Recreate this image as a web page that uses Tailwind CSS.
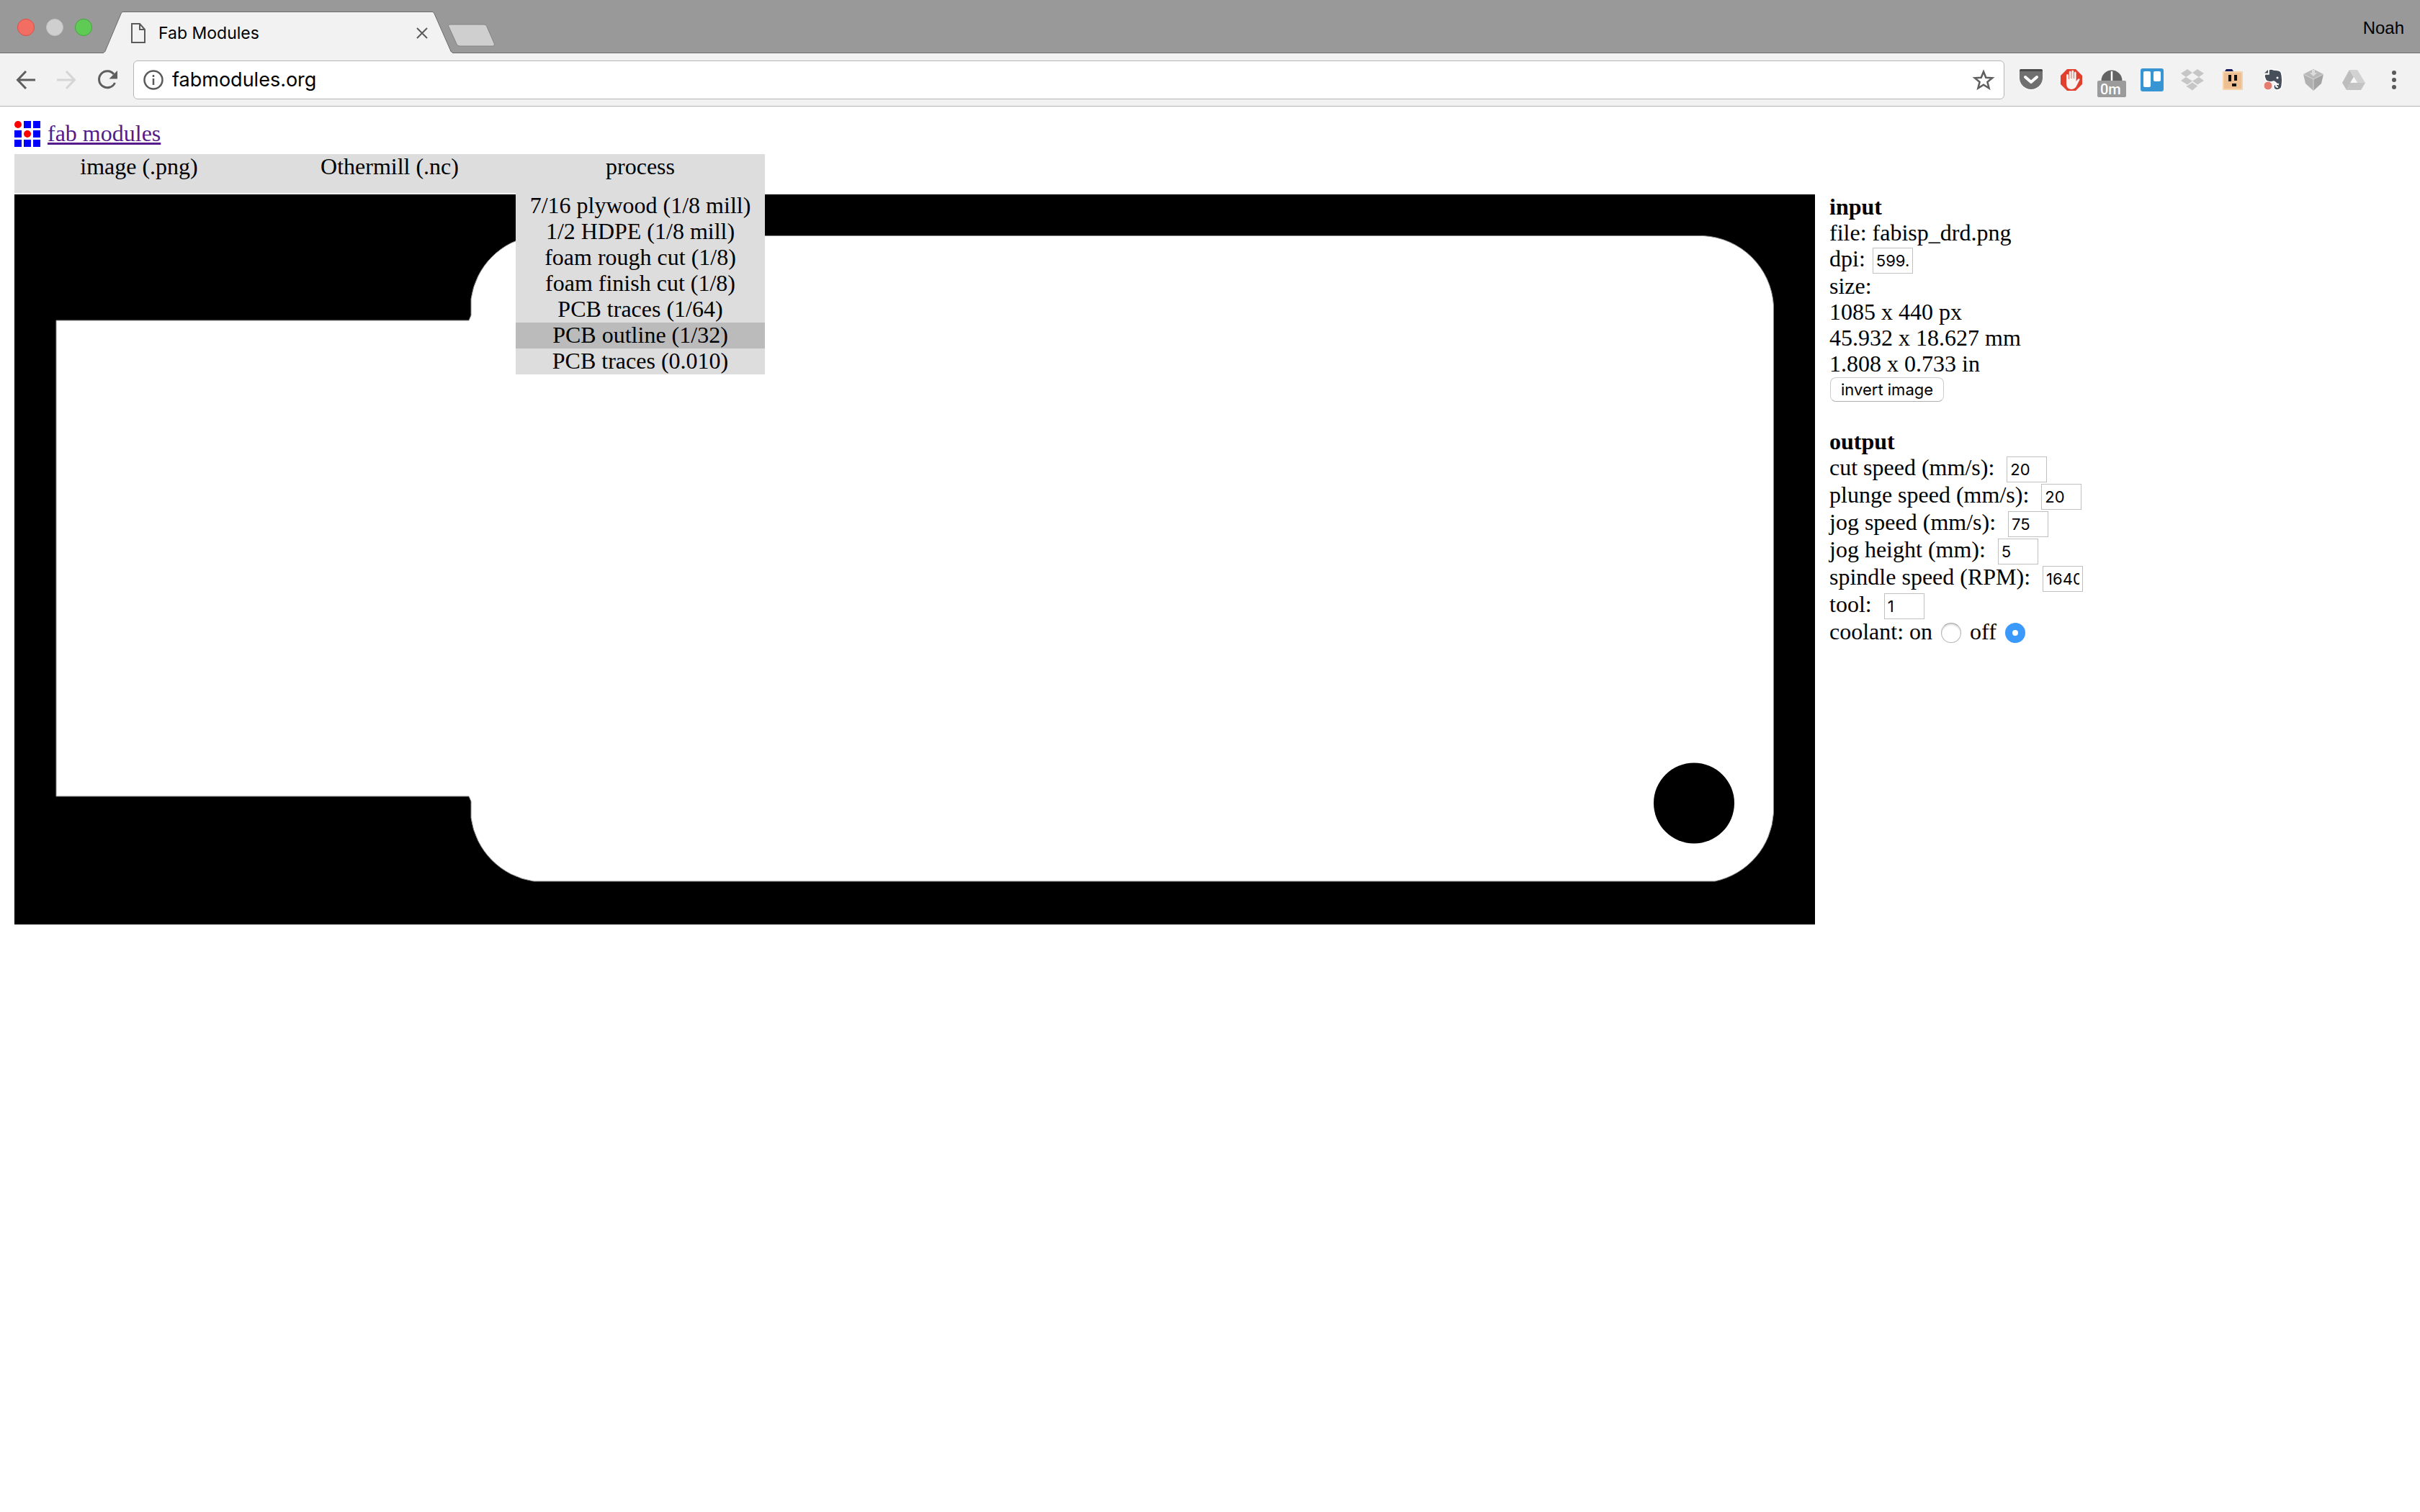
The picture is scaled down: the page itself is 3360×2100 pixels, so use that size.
<!DOCTYPE html>
<html lang="en">
<head>
<meta charset="utf-8">
<title>Fab Modules</title>
<script src="https://cdn.jsdelivr.net/npm/@tailwindcss/browser@4"></script>
</head>
<body class="min-h-screen bg-white text-black">

<!-- Browser window: tab strip -->
<header class="font-['Inter',sans-serif]">
  <div class="flex h-[74px] items-end justify-between border-b border-[#6b6b6b] bg-[#999999]">
    <div class="flex h-full items-end">
      <div class="flex h-full gap-4 pl-6 pt-[26px]">
        <span class="size-6 rounded-full border border-[#dc4f47] bg-[#f26d62]"></span>
        <span class="size-6 rounded-full border border-[#c0c0c0] bg-[#cfcfcf]"></span>
        <span class="size-6 rounded-full border border-[#3ea838] bg-[#5fcb55]"></span>
      </div>
      <div class="relative ml-4 -mb-px h-[58px] w-[484px]">
        <svg class="absolute inset-0" width="484" height="58" viewBox="0 0 484 58" aria-hidden="true">
          <path d="M0 57C1 57 2 56 2.500 54L24 3C24.500 1.500 25.500.5 27 .5H456C457.500.5 458.500 1.500 459 3L481.500 54C482 56 483 57 484 57V58H0Z" fill="#f2f2f2"/>
          <path d="M0 56.500C1 56.500 2 56 2.500 54L24 3C24.500 1.500 25.500.5 27 .5H456C457.500.5 458.500 1.500 459 3L481.500 54C482 56 483 56.500 484 56.500" fill="none" stroke="#6b6b6b"/>
        </svg>
        <div class="relative flex h-full items-center pl-[38px] pr-[34px] pt-px">
          <svg width="20" height="28" viewBox="0 0 20 28" fill="none" stroke="#5a5a5a" stroke-width="2" aria-hidden="true"><path d="M1 1H12L19 9V27H1ZM12 1V9H19"/></svg>
          <span class="ml-[18px] flex-1 text-[23px] leading-8">Fab Modules</span>
          <button type="button" aria-label="Close tab"><svg width="16" height="16" viewBox="0 0 16 16" stroke="#5a5a5a" stroke-width="2" aria-hidden="true"><path d="M1 1L15 15M15 1L1 15"/></svg></button>
        </div>
      </div>
      <button type="button" class="mb-2 -ml-[7px]" aria-label="New tab">
        <svg width="68" height="32" viewBox="0 0 68 32" aria-hidden="true"><path d="M4 1H50C53 1 54 2 55 4L65 27C66 30 65 31 63 31H18C15 31 14 30 13 28L2 4C1 2 2 1 4 1Z" fill="#cfcfcf" stroke="#838383"/></svg>
      </button>
    </div>
    <span class="mb-[18px] mr-[22px] font-['Liberation_Sans',sans-serif] text-2xl">Noah</span>
  </div>

  <!-- Browser window: toolbar -->
  <div class="flex h-[74px] items-center border-b border-[#b3b3b3] bg-[#f2f2f2] pl-[22px] pr-2">
    <div class="flex items-center gap-7">
      <button type="button" aria-label="Back"><svg width="28" height="28" viewBox="0 0 28 28" fill="none" stroke="#5e5e5e" stroke-width="3" aria-hidden="true"><path d="M27 14H3M14 2L2.500 14L14 26"/></svg></button>
      <button type="button" aria-label="Forward"><svg width="28" height="28" viewBox="0 0 28 28" fill="none" stroke="#d5d5d5" stroke-width="3" aria-hidden="true"><path d="M1 14H25M14 2L25.500 14L14 26"/></svg></button>
      <button type="button" aria-label="Reload"><svg width="30" height="28" viewBox="0 0 30 28" aria-hidden="true"><path d="M24 6A11.500 11.500 0 1 0 25.500 18" fill="none" stroke="#5e5e5e" stroke-width="3"/><path d="M29 1V12.500H17.500Z" fill="#5e5e5e"/></svg></button>
    </div>
    <div class="ml-[21px] mr-[9px] flex h-[54px] flex-1 items-center rounded-md border border-[#b5b5b5] bg-white pl-[13px] pr-3">
      <svg width="28" height="28" viewBox="0 0 28 28" fill="none" stroke="#5a5a5a" stroke-width="2.500" aria-hidden="true"><circle cx="14" cy="14" r="12.500"/><path d="M14 12V21M14 7V10"/></svg>
      <input type="text" aria-label="Address" value="fabmodules.org" class="ml-3 min-w-0 flex-1 text-[27px] leading-9 outline-none">
      <button type="button" aria-label="Bookmark this page"><svg width="32" height="30" viewBox="0 0 32 30" fill="none" stroke="#5e5e5e" stroke-width="2.500" aria-hidden="true"><path d="M16 3.500L19.300 11.700L28.200 12.300L21.400 17.900L23.600 26.500L16 21.800L8.400 26.500L10.600 17.900L3.800 12.300L12.700 11.700Z"/></svg></button>
    </div>
    <div class="flex items-center">
      <button type="button" class="flex w-14 justify-center" aria-label="Pocket"><svg width="34" height="32" viewBox="0 0 34 32" aria-hidden="true"><path d="M1 6Q1 3 3 3H31Q33 3 33 6V14A16 16.500 0 0 1 1 14Z" fill="#fff"/><path d="M1 4Q1 1 3 1H31Q33 1 33 4V13A16 16 0 0 1 1 13Z" fill="#707070"/><path d="M1 4Q1 1 3 1H31Q33 1 33 4Z" fill="#4a4a4a"/><path d="M9 12L17 19L25 12" fill="none" stroke="#fff" stroke-width="4" stroke-linecap="round" stroke-linejoin="round"/></svg></button>
      <button type="button" class="flex w-14 justify-center" aria-label="AdBlock"><svg width="32" height="32" viewBox="0 0 32 32" aria-hidden="true"><path d="M10 1H22L31 10V22L22 31H10L1 22V10Z" fill="#e2402f"/><path d="M9 10Q9 8 10.500 8T12 10V15H12.800V5Q13 3.500 14.300 3.500T15.600 5V14H16.400V4Q16.500 2.500 17.800 2.500T19.200 4V14H20V6Q20.200 4.500 21.300 4.500T22.600 6V18L25 15Q27.500 13.500 27.500 15.500L22.500 25.500Q20 29 15.500 29Q9 28 9 21Z" fill="#f7f3f1"/></svg></button>
      <button type="button" class="relative flex w-14 justify-center" aria-label="Timer, 0m">
        <svg width="30" height="32" viewBox="0 0 30 32" aria-hidden="true"><path d="M.5 17A14.500 14.500 0 0 1 29.500 17Z" fill="#636363"/><path d="M15 4V17" stroke="#fff" stroke-width="2.500"/></svg>
        <span class="absolute left-2 top-[17px] h-[23px] w-10 rounded-xs bg-[#9b9b9b] pl-1 text-left font-['Roboto',sans-serif] text-xl leading-6 font-medium text-white">0m</span>
      </button>
      <button type="button" class="flex w-14 justify-center" aria-label="Trello"><svg width="32" height="32" viewBox="0 0 32 32" aria-hidden="true"><rect width="32" height="32" rx="3" fill="#3795d4"/><rect x="4" y="4" width="10" height="22" rx="2" fill="#fff"/><rect x="18" y="4" width="10" height="14" rx="2" fill="#fff"/></svg></button>
      <button type="button" class="flex w-14 justify-center" aria-label="Dropbox"><svg width="32" height="30" viewBox="0 0 32 30" fill="#c6c6c6" aria-hidden="true"><path d="M9 0L16 5L7 11L0 6ZM23 0L32 6L25 11L16 5ZM7 11L16 16.500L9 21.500L0 16ZM25 11L32 16L23 21.500L16 16.500ZM16 18.500L23 23.500L16 29.500L7 23.500L9 23Z"/></svg></button>
      <button type="button" class="flex w-14 justify-center" aria-label="Box face"><svg width="30" height="32" viewBox="0 0 30 32" aria-hidden="true"><path d="M4 4L6 1H14L16 4Z" fill="#151a5c"/><rect x="1" y="4" width="28" height="26" fill="#edbf92"/><path d="M2 5V29M28 5V29M1 5H29M1 29H29" stroke="#f7d9b2" stroke-width="1.500"/><path d="M9 9H13V18H9ZM17 9H21V17H17ZM14 21H20V25H14Z" fill="#111"/></svg></button>
      <button type="button" class="flex w-14 justify-center" aria-label="Evernote"><svg width="28" height="32" viewBox="0 0 28 32" aria-hidden="true"><path d="M3 8H8V2Q11 0 15 2Q23 2 25 5Q28 13 26 25Q25 30 19 30Q14 29 15 24Q16 21 20 22Q17 19 15 18Q4 21 3 14Q1 10 3 8Z" fill="#47505a" stroke="#fff" stroke-width="1.500"/><path d="M2 6.500L7 2V6.500Z" fill="#47505a"/><path d="M22 22Q18 21 18 24Q18 26 21 26" fill="none" stroke="#fff" stroke-width="2"/><circle cx="20" cy="13" r="1.500" fill="#fff"/><circle cx="7" cy="24" r="6" fill="#e57c70" stroke="#fff"/></svg></button>
      <button type="button" class="flex w-14 justify-center" aria-label="Shield"><svg width="30" height="32" viewBox="0 0 30 32" aria-hidden="true"><path d="M15 1L29 8L15 15L1 8Z" fill="#b9b9b9"/><path d="M1 8L15 15V31L4 21Z" fill="#b0b0b0"/><path d="M29 8L15 15V31L26 21Z" fill="#a3a3a3"/><path d="M1 8L15 15L29 8M15 15V31" fill="none" stroke="#d6d6d6"/><path d="M13 2H17V6H20L15 11L10 6H13Z" fill="#dcdcdc"/></svg></button>
      <button type="button" class="flex w-14 justify-center" aria-label="Drive"><svg width="34" height="30" viewBox="0 0 34 30" aria-hidden="true"><path d="M11 1L17 11L7 29L1 19Z" fill="#bdbdbd"/><path d="M11 1H22L33 19H22Z" fill="#d2d2d2"/><path d="M12 19H33L27 29H7Z" fill="#c4c4c4"/><path d="M17 11L22 19H12Z" fill="#f7f7f7"/></svg></button>
      <button type="button" class="flex w-14 justify-center" aria-label="Menu"><svg width="8" height="28" viewBox="0 0 8 28" fill="#5a5a5a" aria-hidden="true"><circle cx="4" cy="4" r="3"/><circle cx="4" cy="14" r="3"/><circle cx="4" cy="24" r="3"/></svg></button>
    </div>
  </div>
</header>

<!-- Page -->
<div class="px-5 pt-5 font-['Liberation_Serif',serif] text-[32px] leading-9">
  <div class="flex items-center gap-[10px]">
    <svg width="36" height="36" viewBox="0 0 36 36" aria-hidden="true">
      <path d="M13 0H23V10H13ZM26 0H36V10H26ZM0 13H10V23H0ZM26 13H36V23H26ZM0 26H10V36H0ZM13 26H23V36H13ZM26 26H36V36H26Z" fill="#00f"/>
      <circle cx="5" cy="5" r="5" fill="red"/><circle cx="18" cy="18" r="5" fill="red"/>
    </svg>
    <a href="#" class="pb-[2px] leading-[34px] text-[#551a8b] underline">fab modules</a>
  </div>

  <nav class="relative mt-[10px] flex h-[54px] w-[1042px] items-start gap-[2px] bg-[#dddddd] leading-[34px]">
    <button type="button" class="flex-1 pb-[2px]">image (.png)</button>
    <button type="button" class="flex-1 pb-[2px]">Othermill (.nc)</button>
    <button type="button" class="flex-1 pb-[2px]">process</button>
    <ul class="absolute right-0 top-full w-[346px] bg-[#dddddd] text-center">
      <li class="flex"><button type="button" class="w-full pb-[2px]">7/16 plywood (1/8 mill)</button></li>
      <li class="flex"><button type="button" class="w-full pb-[2px]">1/2 HDPE (1/8 mill)</button></li>
      <li class="flex"><button type="button" class="w-full pb-[2px]">foam rough cut (1/8)</button></li>
      <li class="flex"><button type="button" class="w-full pb-[2px]">foam finish cut (1/8)</button></li>
      <li class="flex"><button type="button" class="w-full pb-[2px]">PCB traces (1/64)</button></li>
      <li class="flex"><button type="button" class="w-full bg-[#bbbbbb] pb-[2px]">PCB outline (1/32)</button></li>
      <li class="flex"><button type="button" class="w-full pb-[2px]">PCB traces (0.010)</button></li>
    </ul>
  </nav>

  <main class="flex items-start gap-5">
    <div class="min-w-0 flex-1 pt-[2px]">
      <!-- Board outline -->
      <svg class="block h-auto w-full bg-black" viewBox="0 0 2500 1014" role="img" aria-label="fabisp_drd.png">
        <g transform="translate(-20 -270)">
          <path fill="#fff" stroke="#8a8a8a" d="M78 445H651L654 438V415A103 103 0 0 1 741 327.500H2365A103 103 0 0 1 2462.500 424V1129A103 103 0 0 1 2381 1224H741A103 103 0 0 1 654 1136V1113L651 1106H78Z"/>
          <circle cx="2352" cy="1115.500" r="56"/>
        </g>
      </svg>
    </div>

    <form class="w-[800px] shrink-0 pt-px">
      <h2 class="font-bold">input</h2>
      <p>file: fabisp_drd.png</p>
      <div class="flex h-[38px] items-baseline gap-[10px]"><label for="dpi">dpi:</label><input id="dpi" type="text" value="599.99" class="h-9 w-14 border border-[#c0c0c0] px-1 font-['Inter',sans-serif] text-[22px]"></div>
      <p>size:</p>
      <p>1085 x 440 px</p>
      <p>45.932 x 18.627 mm</p>
      <p>1.808 x 0.733 in</p>
      <div class="flex h-9 items-center pl-px"><button type="button" class="h-[34px] rounded-lg border border-[#cccccc] border-b-[#b0b0b0] px-[14px] font-['Inter',sans-serif] text-[22px] leading-8">invert image</button></div>

      <h2 class="mt-9 font-bold">output</h2>
      <div class="flex h-[38px] items-baseline gap-[17px]"><label for="cut">cut speed (mm/s):</label><input id="cut" type="text" value="20" class="h-9 w-14 border border-[#c0c0c0] px-1 font-['Inter',sans-serif] text-[22px]"></div>
      <div class="flex h-[38px] items-baseline gap-[17px]"><label for="plunge">plunge speed (mm/s):</label><input id="plunge" type="text" value="20" class="h-9 w-14 border border-[#c0c0c0] px-1 font-['Inter',sans-serif] text-[22px]"></div>
      <div class="flex h-[38px] items-baseline gap-[17px]"><label for="jog">jog speed (mm/s):</label><input id="jog" type="text" value="75" class="h-9 w-14 border border-[#c0c0c0] px-1 font-['Inter',sans-serif] text-[22px]"></div>
      <div class="flex h-[38px] items-baseline gap-[17px]"><label for="height">jog height (mm):</label><input id="height" type="text" value="5" class="h-9 w-14 border border-[#c0c0c0] px-1 font-['Inter',sans-serif] text-[22px]"></div>
      <div class="flex h-[38px] items-baseline gap-[17px]"><label for="spindle">spindle speed (RPM):</label><input id="spindle" type="text" value="16400" class="h-9 w-14 border border-[#c0c0c0] px-1 font-['Inter',sans-serif] text-[22px]"></div>
      <div class="flex h-[38px] items-baseline gap-[17px]"><label for="tool">tool:</label><input id="tool" type="text" value="1" class="h-9 w-14 border border-[#c0c0c0] px-1 font-['Inter',sans-serif] text-[22px]"></div>
      <div class="flex items-center gap-3">
        <label for="on">coolant: on</label><input id="on" type="radio" name="coolant" class="mt-1 size-7 appearance-none rounded-full border border-[#b5b5b5] border-t-[#a0a0a0] bg-white shadow-[inset_0_2px_2px_#dddddd]">
        <label for="off">off</label><input id="off" type="radio" name="coolant" checked class="mt-1 size-7 appearance-none rounded-full border-[10px] border-[#3b99fc] bg-white">
      </div>
    </form>
  </main>
</div>
</body>
</html>
